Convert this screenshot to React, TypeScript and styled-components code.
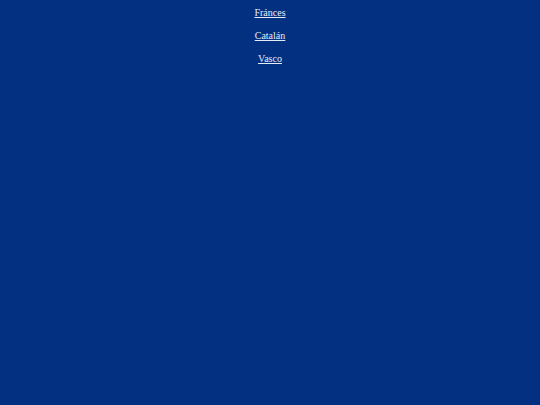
import React from "react";
import styled, { createGlobalStyle } from "styled-components";

const GlobalStyle = createGlobalStyle`
  html, body {
    margin: 0;
    padding: 0;
    background: #043081;
  }
`;

const Page = styled.div`
  min-height: 405px;
  background: #043081;
  font-family: "Liberation Serif", "Times New Roman", serif;
  font-size: 10px;
`;

const LangList = styled.ul`
  list-style: none;
  margin: 0;
  padding: 7px 0 0;
  display: flex;
  flex-direction: column;
  align-items: center;
  gap: 11px;
`;

const LangItem = styled.li`
  line-height: 12px;
`;

const LangLink = styled.a`
  color: #e6ecf5;
  text-decoration: underline;
`;

const languages = ["Fránces", "Catalán", "Vasco"];

export default function App() {
  return (
    <Page>
      <GlobalStyle />
      <LangList>
        {languages.map((lang) => (
          <LangItem key={lang}>
            <LangLink href="#">{lang}</LangLink>
          </LangItem>
        ))}
      </LangList>
    </Page>
  );
}
